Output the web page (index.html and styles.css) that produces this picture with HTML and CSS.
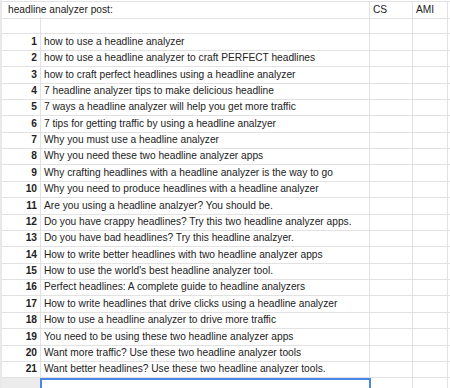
FILE: index.html
```html
<!DOCTYPE html>
<html>
<head>
<meta charset="utf-8">
<link rel="stylesheet" href="styles.css">
</head>
<body>
<div class="sheet">
  <div class="row">
    <div class="c title">headline analyzer post:</div>
    <div class="c cs">CS</div>
    <div class="c ami">AMI</div>
    <div class="c rest"></div>
  </div>
  <div class="row">
    <div class="c num"></div>
    <div class="c txt"></div>
    <div class="c cs"></div>
    <div class="c ami"></div>
    <div class="c rest"></div>
  </div>
  <div class="row"><div class="c num">1</div><div class="c txt">how to use a headline analyzer</div><div class="c cs"></div><div class="c ami"></div><div class="c rest"></div></div>
  <div class="row"><div class="c num">2</div><div class="c txt">how to use a headline analyzer to craft PERFECT headlines</div><div class="c cs"></div><div class="c ami"></div><div class="c rest"></div></div>
  <div class="row"><div class="c num">3</div><div class="c txt">how to craft perfect headlines using a headline analyzer</div><div class="c cs"></div><div class="c ami"></div><div class="c rest"></div></div>
  <div class="row"><div class="c num">4</div><div class="c txt">7 headline analyzer tips to make delicious headline</div><div class="c cs"></div><div class="c ami"></div><div class="c rest"></div></div>
  <div class="row"><div class="c num">5</div><div class="c txt">7 ways a headline analyzer will help you get more traffic</div><div class="c cs"></div><div class="c ami"></div><div class="c rest"></div></div>
  <div class="row"><div class="c num">6</div><div class="c txt">7 tips for getting traffic by using a headline analzyer</div><div class="c cs"></div><div class="c ami"></div><div class="c rest"></div></div>
  <div class="row"><div class="c num">7</div><div class="c txt">Why you must use a headline analyzer</div><div class="c cs"></div><div class="c ami"></div><div class="c rest"></div></div>
  <div class="row"><div class="c num">8</div><div class="c txt">Why you need these two headline analyzer apps</div><div class="c cs"></div><div class="c ami"></div><div class="c rest"></div></div>
  <div class="row"><div class="c num">9</div><div class="c txt">Why crafting headlines with a headline analyzer is the way to go</div><div class="c cs"></div><div class="c ami"></div><div class="c rest"></div></div>
  <div class="row"><div class="c num">10</div><div class="c txt">Why you need to produce headlines with a headline analyzer</div><div class="c cs"></div><div class="c ami"></div><div class="c rest"></div></div>
  <div class="row"><div class="c num">11</div><div class="c txt">Are you using a headline analzyer? You should be.</div><div class="c cs"></div><div class="c ami"></div><div class="c rest"></div></div>
  <div class="row"><div class="c num">12</div><div class="c txt">Do you have crappy headlines? Try this two headline analyzer apps.</div><div class="c cs"></div><div class="c ami"></div><div class="c rest"></div></div>
  <div class="row"><div class="c num">13</div><div class="c txt">Do you have bad headlines? Try this headline analzyer.</div><div class="c cs"></div><div class="c ami"></div><div class="c rest"></div></div>
  <div class="row"><div class="c num">14</div><div class="c txt">How to write better headlines with two headline analyzer apps</div><div class="c cs"></div><div class="c ami"></div><div class="c rest"></div></div>
  <div class="row"><div class="c num">15</div><div class="c txt">How to use the world's best headline analyzer tool.</div><div class="c cs"></div><div class="c ami"></div><div class="c rest"></div></div>
  <div class="row"><div class="c num">16</div><div class="c txt">Perfect headlines: A complete guide to headline analyzers</div><div class="c cs"></div><div class="c ami"></div><div class="c rest"></div></div>
  <div class="row"><div class="c num">17</div><div class="c txt">How to write headlines that drive clicks using a headline analyzer</div><div class="c cs"></div><div class="c ami"></div><div class="c rest"></div></div>
  <div class="row"><div class="c num">18</div><div class="c txt">How to use a headline analyzer to drive more traffic</div><div class="c cs"></div><div class="c ami"></div><div class="c rest"></div></div>
  <div class="row"><div class="c num">19</div><div class="c txt">You need to be using these two headline analyzer apps</div><div class="c cs"></div><div class="c ami"></div><div class="c rest"></div></div>
  <div class="row"><div class="c num">20</div><div class="c txt">Want more traffic? Use these two headline analyzer tools</div><div class="c cs"></div><div class="c ami"></div><div class="c rest"></div></div>
  <div class="row"><div class="c num">21</div><div class="c txt">Want better headlines? Use these two headline analyzer tools.</div><div class="c cs"></div><div class="c ami"></div><div class="c rest"></div></div>
  <div class="row last"><div class="c num gray"></div><div class="c txt sel"></div><div class="c cs"></div><div class="c ami"></div><div class="c rest"></div></div>
</div>
</body>
</html>
```
FILE: styles.css
```css
html, body {
  margin: 0;
  padding: 0;
  background: #fff;
}
body {
  font-family: "Liberation Sans", Arial, sans-serif;
  font-size: 10.2px;
  color: #222;
  overflow: hidden;
}
.sheet {
  padding-top: 1px;
  border-left: 2px solid #e8e8e8;
}
.row {
  display: grid;
  grid-template-columns: 39px 329px 43px 35px 1fr;
  height: 16.38px;
  box-sizing: border-box;
  border-top: 1px solid #e2e2e2;
}
.row + .row {
  border-top: 0;
}
.c {
  box-sizing: border-box;
  border-right: 1px solid #e2e2e2;
  border-bottom: 1px solid #e2e2e2;
  line-height: 16px;
  white-space: nowrap;
  overflow: visible;
}
.title {
  grid-column: 1 / 3;
  padding-left: 6px;
}
.num {
  text-align: right;
  font-weight: bold;
  padding-right: 3px;
}
.txt {
  padding-left: 3px;
}
.cs, .ami {
  padding-left: 3px;
}
.rest {
  border-right: 0;
}
.gray {
  background: #ececec;
  border-bottom: 0;
}
.last .c {
  border-bottom: 0;
  height: 20px;
}
.sel {
  border: 2px solid #4a86e8;
  border-bottom: 0;
  margin-left: -1px;
  margin-right: -1px;
}
```
